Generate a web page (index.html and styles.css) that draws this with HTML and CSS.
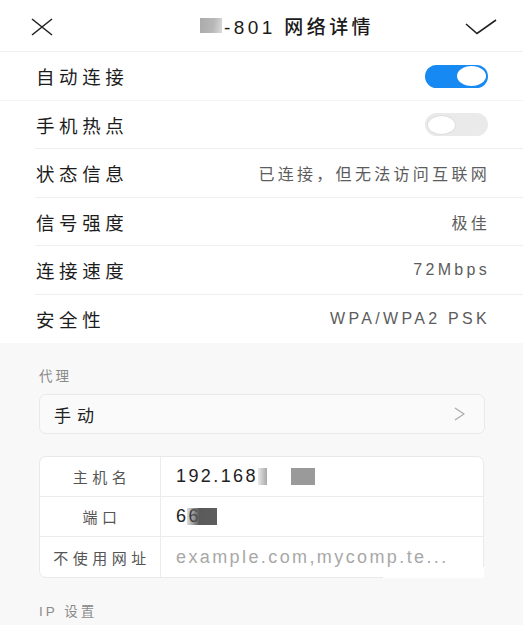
FILE: index.html
```html
<!DOCTYPE html>
<html lang="zh">
<head>
<meta charset="utf-8">
<link rel="stylesheet" href="styles.css">
</head>
<body>
<header class="topbar">
  <svg class="icon-close" width="22" height="18" viewBox="0 0 22 18"><path d="M1 1 L21 17 M21 1 L1 17" stroke="#222" stroke-width="1.6" fill="none"/></svg>
  <div class="title"><span class="mask-title"></span><span class="title-text">-801 网络详情</span></div>
  <svg class="icon-check" width="32" height="16" viewBox="0 0 32 16"><path d="M1 5 L12 14.5 L31 1" stroke="#222" stroke-width="1.6" fill="none"/></svg>
</header>

<section class="list">
  <div class="row row-first"><span class="label">自动连接</span><span class="toggle on"><span class="knob"></span></span></div>
  <div class="row"><span class="label">手机热点</span><span class="toggle off"><span class="knob"></span></span></div>
  <div class="row"><span class="label">状态信息</span><span class="value">已连接，但无法访问互联网</span></div>
  <div class="row"><span class="label">信号强度</span><span class="value">极佳</span></div>
  <div class="row"><span class="label">连接速度</span><span class="value">72Mbps</span></div>
  <div class="row row-last"><span class="label">安全性</span><span class="value">WPA/WPA2 PSK</span></div>
</section>

<section class="gray">
  <div class="section-label">代理</div>
  <div class="select">
    <span class="select-text">手动</span>
    <svg width="11" height="14" viewBox="0 0 11 14"><path d="M1 1 L10 7 L1 13" stroke="#aaa" stroke-width="1.2" fill="none"/></svg>
  </div>
  <div class="table">
    <div class="trow">
      <div class="tlabel">主机名</div>
      <div class="tvalue">192.168<span class="blur-a"></span><span class="blur-b"></span></div>
    </div>
    <div class="trow">
      <div class="tlabel">端口</div>
      <div class="tvalue">66<span class="blur-c"></span></div>
    </div>
    <div class="trow">
      <div class="tlabel">不使用网址</div>
      <div class="tvalue placeholder">example.com,mycomp.te...</div>
    </div>
    <span class="patch"></span>
  </div>
  <div class="section-label ip">IP 设置</div>
</section>
</body>
</html>
```

FILE: styles.css
```css
* { box-sizing: border-box; }
html, body { margin: 0; padding: 0; }
body {
  width: 523px;
  height: 625px;
  overflow: hidden;
  background: #f8f8f8;
  font-family: "Liberation Sans", "Noto Sans CJK SC", sans-serif;
  color: #1c1c1c;
}

.topbar {
  height: 52px;
  background: #fff;
  border-bottom: 1px solid #f0f0f0;
  display: flex;
  align-items: center;
  justify-content: space-between;
  padding: 0 26px 0 31px;
}
.icon-close { display: block; margin-top: 2px; }
.icon-check { display: block; margin-top: 2px; }
.title {
  display: flex;
  align-items: center;
  padding-left: 56px;
  font-size: 19px;
  letter-spacing: 3.4px;
  color: #1a1a1a;
  font-weight: 500;
}
.mask-title {
  display: inline-block;
  width: 22px;
  height: 15px;
  margin-right: 2px;
  background: linear-gradient(100deg, #aaaaaa 0%, #b8b8b8 60%, #dcdcdc 100%);
}

.list { background: #fff; }
.row {
  height: 48.5px;
  display: flex;
  align-items: center;
  justify-content: space-between;
  padding: 0 33px 0 36px;
  position: relative;
}
.row::after {
  content: "";
  position: absolute;
  left: 35px;
  right: 0;
  bottom: 0;
  height: 1px;
  background: #efefef;
}
.row-first::after { left: 0; background: #f4f4f4; }
.row-last::after { display: none; }
.label {
  font-size: 18.5px;
  letter-spacing: 4.6px;
  color: #1c1c1c;
}
.value {
  font-size: 16px;
  letter-spacing: 3.3px;
  color: #5c5c5c;
}

.toggle {
  width: 63px;
  height: 23px;
  border-radius: 12px;
  display: flex;
  align-items: center;
  padding: 0 2px;
  margin-right: 2px;
}
.toggle .knob {
  width: 29px;
  height: 20px;
  border-radius: 50%;
  background: #fff;
}
.toggle.on { background: #1789f3; justify-content: flex-end; }
.toggle.off { background: #eaeaea; justify-content: flex-start; }
.toggle.off .knob { border: 1px solid #dedede; }

.gray { padding: 25px 39px 0 39px; }
.section-label {
  font-size: 13.5px;
  letter-spacing: 3px;
  color: #8a8a8a;
  line-height: 18px;
}
.select {
  margin-top: 8px;
  height: 40px;
  width: 446px;
  border: 1px solid #e9e9e9;
  border-radius: 7px;
  background: #fafafa;
  display: flex;
  align-items: center;
  justify-content: space-between;
  padding: 0 19px 0 14px;
}
.select svg { display: block; }
.select-text {
  font-size: 17px;
  letter-spacing: 6px;
  color: #222;
}

.table {
  margin-top: 22px;
  width: 445px;
  border: 1px solid #e9e9e9;
  border-radius: 7px;
  background: #fff;
  position: relative;
}
.trow {
  display: flex;
  height: 40px;
  border-bottom: 1px solid #ececec;
}
.trow:last-of-type { border-bottom: none; }
.tlabel {
  width: 121px;
  border-right: 1px solid #ececec;
  display: flex;
  align-items: center;
  justify-content: center;
  font-size: 15px;
  letter-spacing: 4.5px;
  padding-left: 4px;
  color: #555;
}
.tvalue {
  flex: 1;
  display: flex;
  align-items: center;
  padding-left: 15px;
  font-size: 18px;
  letter-spacing: 2.4px;
  color: #222;
  white-space: nowrap;
}
.tvalue.placeholder { color: #a8a8a8; }
.blur-a {
  display: inline-block;
  width: 9px;
  height: 17px;
  background: linear-gradient(to right, #e8e8e8, #a8a8a8);
}
.blur-b {
  display: inline-block;
  width: 24px;
  height: 17px;
  margin-left: 24px;
  background: #9a9a9a;
}
.blur-c {
  display: inline-block;
  width: 30px;
  height: 17px;
  margin-left: -14px;
  background: linear-gradient(to right, rgba(90,90,90,0.2), #5a5a5a 40%, #5e5e5e);
}
.patch {
  position: absolute;
  right: -1px;
  bottom: -1px;
  width: 101px;
  height: 11px;
  background: #fff;
}
.section-label.ip { margin-top: 25px; }
```
